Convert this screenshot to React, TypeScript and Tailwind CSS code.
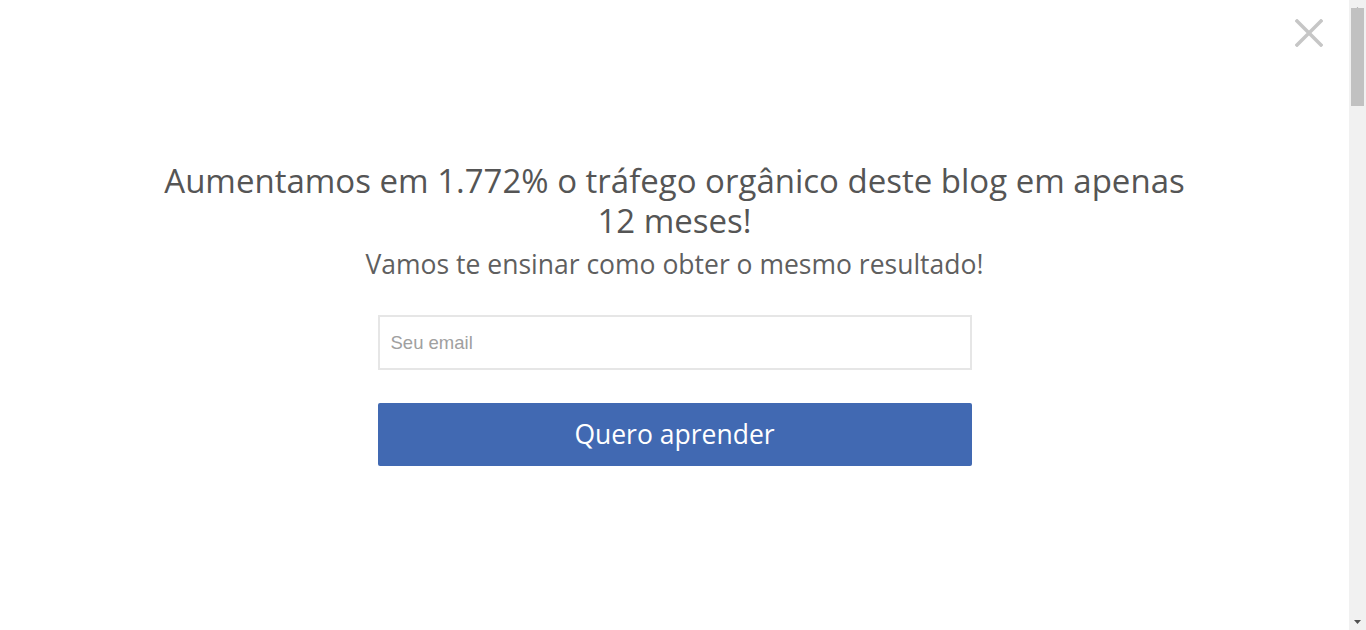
import React from 'react';

const CloseIcon: React.FC = () => (
    <svg width="28" height="28" viewBox="0 0 28 28" fill="none">
        <path d="M2 2 L26 26 M26 2 L2 26" stroke="#c6c6c6" strokeWidth="3.5" strokeLinecap="square" />
    </svg>
);

const Scrollbar: React.FC = () => (
    <div className="w-[17px] h-[630px] bg-[#f1f1f1] flex flex-col items-center shrink-0">
        <div className="h-[17px] w-full flex items-center justify-center">
            <svg width="7" height="4" viewBox="0 0 7 4"><path d="M0 4 L3.5 0 L7 4 Z" fill="#a3a3a3" /></svg>
        </div>
        <div className="w-[13px] h-[98px] bg-[#c1c1c1] mt-[-9px]" />
        <div className="flex-1" />
        <div className="h-[17px] w-full flex items-center justify-center">
            <svg width="7" height="4" viewBox="0 0 7 4"><path d="M0 0 L3.5 4 L7 0 Z" fill="#505050" /></svg>
        </div>
    </div>
);

export default function App() {
    return (
        <div className="flex w-[1366px] h-[630px] bg-white overflow-hidden" style={{ fontFamily: '"Open Sans", sans-serif' }}>
            <div className="flex-1 flex flex-col items-center relative">
                <button className="absolute top-[19px] right-[26px]" aria-label="Fechar">
                    <CloseIcon />
                </button>

                <h1 className="mt-[161px] w-[1040px] text-center text-[33px] leading-[40px] text-[#555555]">
                    Aumentamos em 1.772% o tráfego orgânico deste blog em apenas 12 meses!
                </h1>
                <p className="mt-[6px] text-[26.5px] leading-[34px] text-[#5f5f5f]">
                    Vamos te ensinar como obter o mesmo resultado!
                </p>

                <form className="mt-[34px] w-[594px] flex flex-col" onSubmit={(e) => e.preventDefault()}>
                    <input
                        type="email"
                        placeholder="Seu email"
                        className="h-[55px] border-2 border-[#e6e6e6] px-[11px] text-[18.5px] text-[#555] placeholder:text-[#a0a0a0] outline-none"
                        style={{ fontFamily: '"Liberation Sans", Arial, sans-serif' }}
                    />
                    <button
                        type="submit"
                        className="mt-[33px] h-[63px] bg-[#4169b2] rounded-[2px] text-white text-[26.5px]"
                    >
                        Quero aprender
                    </button>
                </form>
            </div>
            <Scrollbar />
        </div>
    );
}
